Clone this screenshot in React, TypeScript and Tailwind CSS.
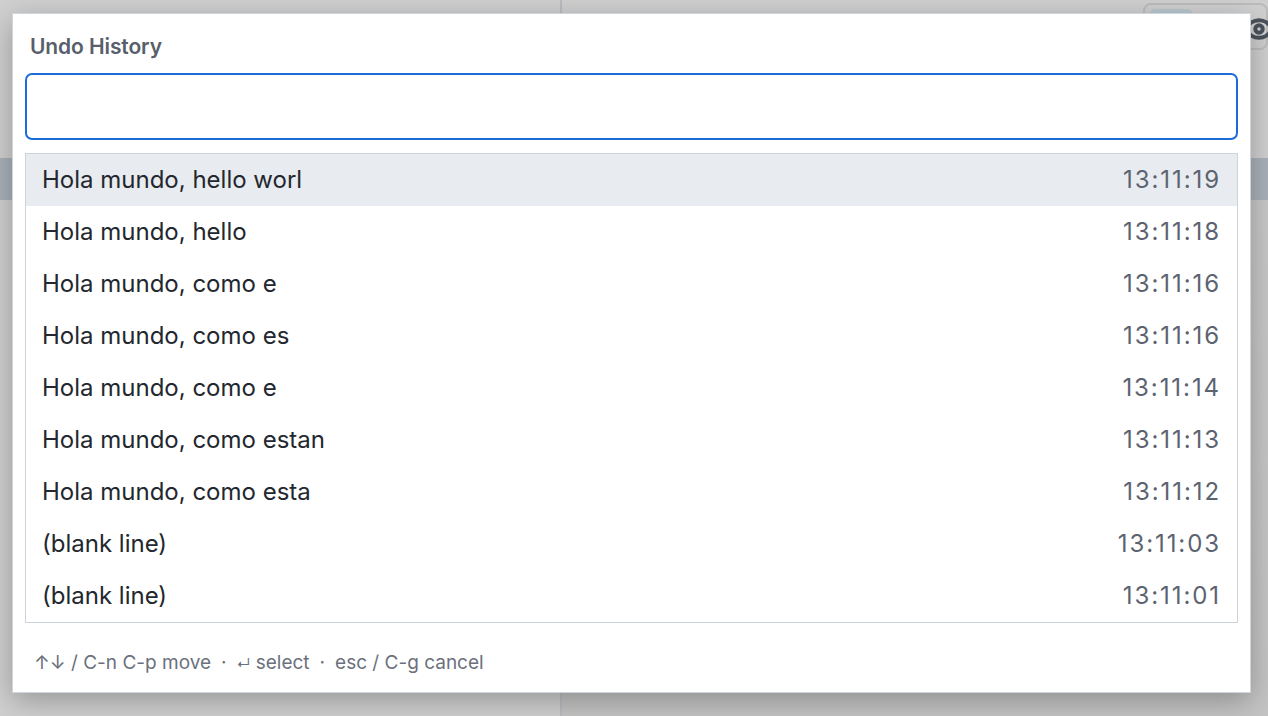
import { Eye } from "lucide-react";

const entries = [
  { text: "Hola mundo, hello worl", time: "13:11:19" },
  { text: "Hola mundo, hello", time: "13:11:18" },
  { text: "Hola mundo, como e", time: "13:11:16" },
  { text: "Hola mundo, como es", time: "13:11:16" },
  { text: "Hola mundo, como e", time: "13:11:14" },
  { text: "Hola mundo, como estan", time: "13:11:13" },
  { text: "Hola mundo, como esta", time: "13:11:12" },
  { text: "(blank line)", time: "13:11:03" },
  { text: "(blank line)", time: "13:11:01" },
];

export default function App() {
  return (
    <div
      className="relative h-[716px] w-[1268px] overflow-hidden bg-[#d0d0d0]"
      style={{ fontFamily: "Inter, 'Noto Sans', sans-serif" }}
    >
      {/* Dimmed app behind the dialog */}
      <div className="flex h-full">
        <div className="flex w-[562px] flex-col border-r-2 border-[#b9bdc2]">
          <div className="h-[158px]" />
          <div className="h-[42px] bg-[#aab1ba]" />
          <div className="flex-1" />
        </div>
        <div className="flex flex-1 flex-col">
          <div className="flex h-[52px] items-start justify-end gap-2 pt-[3px]">
            <div className="flex h-[47px] w-[125px] items-start rounded-lg border-2 border-[#bdbdbd] p-[4px]">
              <div className="h-[20px] w-[44px] rounded-md bg-[#b9c8cf]" />
            </div>
          </div>
          <div className="h-[106px]" />
          <div className="h-[42px] bg-[#aab1ba]" />
          <div className="flex-1 bg-gradient-to-b from-[#c8c8c8] to-[#c4c4c4]" />
        </div>
      </div>
      <Eye className="absolute left-[1244px] top-[14px] h-[30px] w-[30px] text-[#4b525c]" strokeWidth={3.2} />

      {/* Dialog */}
      <div className="absolute left-[12px] top-[13px] flex h-[680px] w-[1239px] flex-col border border-[#cfd5dc] bg-white px-[12px] shadow-[0_8px_28px_rgba(0,0,0,0.28)]">
        <div className="pl-[5px] pt-[18px] text-[21px] font-semibold leading-[30px] tracking-[-0.005em] text-[#585f6b]">
          Undo History
        </div>
        <input
          className="mt-[11px] h-[67px] w-full shrink-0 rounded-[7px] border-2 border-[#1a6cd8] bg-white px-3 text-[22px] outline-none"
        />
        <div className="mt-[13px] border border-[#ccd3db]">
          {entries.map((e, i) => (
            <div
              key={i}
              className={
                "flex h-[52px] items-center justify-between pl-[16px] pr-[16px] text-[24px] " +
                (i === 0 ? "bg-[#e8ebf0]" : "bg-white")
              }
            >
              <span className="text-[#23272e]">{e.text}</span>
              <span className="tracking-[0.08em] text-[#5c6370]">{e.time}</span>
            </div>
          ))}
        </div>
        <div className="pl-[9px] pt-[26px] text-[19px] text-[#6b717c]">
          ↑↓ / C-n C-p move
          <span className="mx-[10px]">·</span>
          <span className="text-[14px]">↵</span> select
          <span className="mx-[10px]">·</span>
          esc / C-g cancel
        </div>
      </div>
    </div>
  );
}
